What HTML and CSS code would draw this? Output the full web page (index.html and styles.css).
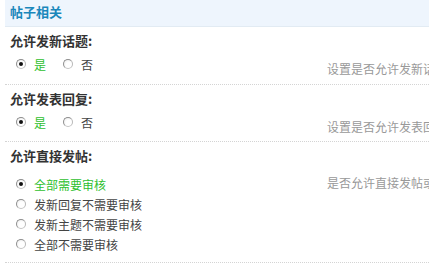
FILE: index.html
```html
<!DOCTYPE html>
<html>
<head>
<meta charset="utf-8">
<link rel="stylesheet" href="styles.css">
</head>
<body>
<div class="panel">
  <div class="head">帖子相关</div>

  <div class="item first">
    <div class="label">允许发新话题:</div>
    <div class="row inline-row">
      <div class="opts inline">
        <span class="opt on"><span class="radio checked"></span>是</span>
        <span class="opt"><span class="radio"></span>否</span>
      </div>
      <div class="tip">设置是否允许发新话题</div>
    </div>
  </div>

  <div class="item">
    <div class="label">允许发表回复:</div>
    <div class="row inline-row">
      <div class="opts inline">
        <span class="opt on"><span class="radio checked"></span>是</span>
        <span class="opt"><span class="radio"></span>否</span>
      </div>
      <div class="tip">设置是否允许发表回复</div>
    </div>
  </div>

  <div class="item last">
    <div class="label">允许直接发帖:</div>
    <div class="row list-row">
      <div class="opts list">
        <div class="opt on"><span class="radio checked"></span>全部需要审核</div>
        <div class="opt"><span class="radio"></span>发新回复不需要审核</div>
        <div class="opt"><span class="radio"></span>发新主题不需要审核</div>
        <div class="opt"><span class="radio"></span>全部不需要审核</div>
      </div>
      <div class="tip top">是否允许直接发帖或者需要审核</div>
    </div>
  </div>
</div>
</body>
</html>
```

FILE: styles.css
```css
html, body {
  margin: 0;
  padding: 0;
  background: #fff;
  overflow: hidden;
}
body {
  font-family: "Noto Sans CJK SC", "Noto Sans", sans-serif;
  font-size: 12px;
  color: #333;
  width: 429px;
  height: 265px;
}
.panel {
  margin-left: 5px;
  width: 700px;
}
.head {
  height: 24px;
  line-height: 24px;
  padding: 0 0 2px 5px;
  background: #eef5fd;
  border-bottom: 1px solid #e2ebf3;
  color: #1a87bb;
  font-weight: bold;
  font-size: 13px;
}
.item {
  padding: 3px 0 9px 0;
  border-bottom: 1px dotted #d4d4d4;
}
.item.first {
  padding-bottom: 10px;
}
.item.last {
  padding-bottom: 8px;
}
.label {
  height: 22px;
  line-height: 22px;
  padding-left: 5px;
  font-weight: bold;
  font-size: 13px;
  color: #333;
}
.row {
  display: flex;
  align-items: flex-start;
  margin-top: 2px;
}
.inline-row {
  height: 20px;
}
.list-row {
  margin-top: 7px;
}
.opts {
  width: 311px;
  padding-left: 11px;
  flex: none;
}
.opts.inline {
  display: flex;
  height: 20px;
  align-items: center;
}
.opt {
  display: flex;
  align-items: center;
  height: 20px;
  color: #444;
}
.inline .opt + .opt {
  margin-left: 17px;
}
.opt.on {
  color: #2fbf2f;
}
.radio {
  width: 8px;
  height: 8px;
  border: 1px solid #8e8e8e;
  border-bottom-color: #c4c4c4;
  border-right-color: #b8b8b8;
  border-radius: 50%;
  background: radial-gradient(circle at 60% 60%, #ffffff 40%, #e6e6e6 100%);
  margin-right: 8px;
  position: relative;
  flex: none;
}
.radio.checked::after {
  content: "";
  position: absolute;
  left: 2px;
  top: 2px;
  width: 4px;
  height: 4px;
  border-radius: 50%;
  background: #111;
}
.tip {
  padding-top: 5px;
  line-height: 20px;
  color: #999;
  white-space: nowrap;
}
.tip.top {
  padding-top: 0;
  margin-top: -1px;
}
```
